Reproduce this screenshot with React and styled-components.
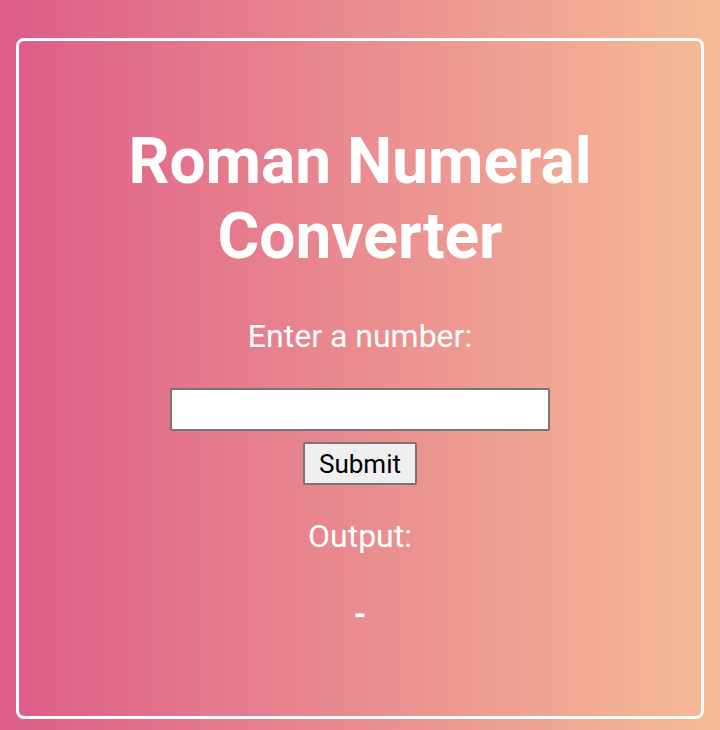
import React, { useState } from 'react'
import styled, { createGlobalStyle } from 'styled-components'

const GlobalStyle = createGlobalStyle`
  html, body {
    margin: 0;
    padding: 0;
  }
  body {
    font-family: Roboto, "Liberation Sans", sans-serif;
    background: linear-gradient(to right, #dd5c88, #f6bc97);
    min-height: 730px;
  }
`

const Page = styled.div`
  padding: 38px 16px 11px;
`

const Card = styled.div`
  box-sizing: border-box;
  min-height: 681px;
  border: 3px solid #fff;
  border-radius: 8px;
  padding: 40px;
  text-align: center;
  color: #fff;
`

const Title = styled.h1`
  font-size: 64px;
  font-weight: 700;
  line-height: normal;
  margin: 43px 0 43px;
`

const Label = styled.p`
  font-size: 32px;
  margin: 0 0 ${props => props.gap || 0}px;
  margin-top: ${props => props.top || 0}px;
`

const Form = styled.form`
  display: flex;
  flex-direction: column;
  align-items: center;
  gap: 11px;
`

const Input = styled.input`
  box-sizing: border-box;
  width: 380px;
  height: 43px;
  border: 2px solid #767676;
  border-radius: 2px;
  background: #fff;
  font-family: Roboto, sans-serif;
  font-size: 26px;
  padding: 1px 4px;
`

const Button = styled.button`
  box-sizing: border-box;
  height: 43px;
  padding: 0 14px;
  border: 2px solid #767676;
  border-radius: 2px;
  background: #efefef;
  color: #000;
  font-family: Roboto, sans-serif;
  font-size: 26px;
`

const Result = styled.p`
  font-size: 32px;
  font-weight: 700;
  margin: 40px 0 0;
`

const toRoman = (n) => {
  const map = [[1000, 'M'], [900, 'CM'], [500, 'D'], [400, 'CD'], [100, 'C'], [90, 'XC'],
    [50, 'L'], [40, 'XL'], [10, 'X'], [9, 'IX'], [5, 'V'], [4, 'IV'], [1, 'I']]
  let out = ''
  for (const [v, s] of map) {
    while (n >= v) { out += s; n -= v }
  }
  return out
}

const App = () => {
  const [value, setValue] = useState('')
  const [result, setResult] = useState('-')

  const submit = (e) => {
    e.preventDefault()
    const n = parseInt(value, 10)
    setResult(n > 0 && n < 4000 ? toRoman(n) : '-')
  }

  return (
    <>
      <GlobalStyle />
      <Page>
        <Card>
          <Title>Roman Numeral Converter</Title>
          <Label gap={33}>Enter a number:</Label>
          <Form onSubmit={submit}>
            <Input type="number" value={value} onChange={e => setValue(e.target.value)} />
            <Button type="submit">Submit</Button>
          </Form>
          <Label top={32}>Output:</Label>
          <Result>{result}</Result>
        </Card>
      </Page>
    </>
  )
}

export default App
